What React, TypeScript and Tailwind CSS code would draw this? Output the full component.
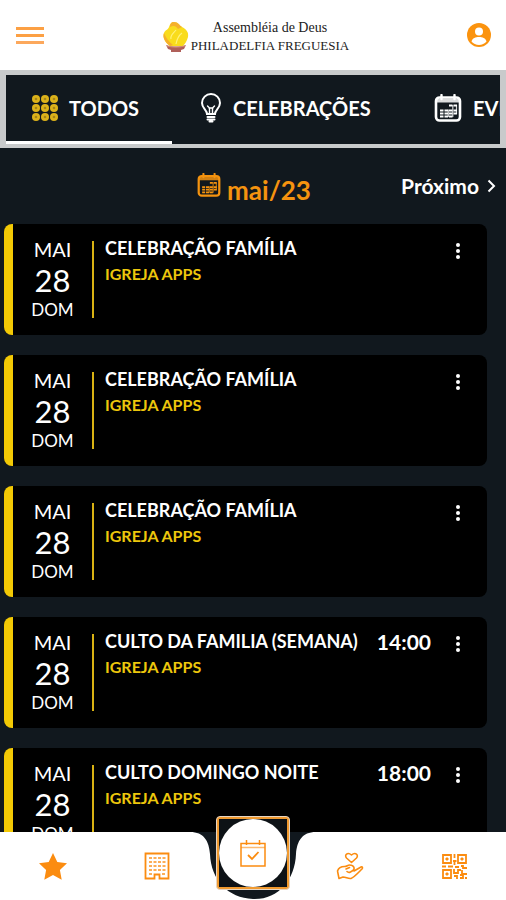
import React from 'react';

type IconProps = { className?: string };

const TodosIcon = ({ className }: IconProps) => (
  <svg viewBox="0 0 26 26" className={className} aria-hidden="true">
    {[4, 13, 22].map((y) =>
      [4, 13, 22].map((x) => (
        <g key={`${x}-${y}`}>
          <circle cx={x} cy={y} r="4" fill="#dcb21a" />
          <circle cx={x} cy={y} r="1.3" fill="#a5841a" />
        </g>
      ))
    )}
  </svg>
);

const BulbIcon = ({ className }: IconProps) => (
  <svg viewBox="0 0 22 30" className={className} fill="none" stroke="currentColor" strokeWidth="2" strokeLinecap="round" aria-hidden="true">
    <path d="M7 21c0-4-5-5.500-5-11a9 9 0 0 1 18 0c0 5.500-5 7-5 11z" />
    <path d="M7.500 24h7M7.500 26.500h7M9.500 28.500h3" />
    <path d="M9.500 21v-6l-2-2M12.500 21v-6l2-2M9 15h4" strokeWidth="1.400" />
  </svg>
);

const CalendarIcon = ({ className }: IconProps) => (
  <svg viewBox="0 0 28 28" className={className} fill="none" stroke="currentColor" aria-hidden="true">
    <rect x="2" y="3.500" width="24" height="23" rx="3.500" strokeWidth="2.600" />
    <path d="M2 6.500h24" strokeWidth="4" opacity="0.85" />
    <path d="M7.500 1v4M20.500 1v4" strokeWidth="2.400" strokeLinecap="round" />
    <path d="M15 11.500h8M6 16.500h17M6 19.500h17M6 22.500h13" strokeWidth="2" strokeDasharray="3.500 1" />
    <path d="M18.800 11v12M14.300 15.500v7.500M22.500 11v9" strokeWidth="1.200" opacity="0.8" />
  </svg>
);

const ChevronIcon = ({ className }: IconProps) => (
  <svg viewBox="0 0 9 14" className={className} fill="none" stroke="currentColor" strokeWidth="2" aria-hidden="true">
    <path d="M1.500 1.500 7 7l-5.500 5.500" />
  </svg>
);

const UserIcon = ({ className }: IconProps) => (
  <svg viewBox="0 0 24 24" className={className} aria-hidden="true">
    <circle cx="12" cy="12" r="12" fill="#fb930e" />
    <circle cx="12" cy="8.500" r="4" fill="#fff" />
    <path d="M4.500 18.500c1-3.500 4-4.500 7.500-4.500s6.500 1 7.500 4.500c-1.900 2.200-4.500 3.500-7.500 3.500s-5.600-1.300-7.500-3.500z" fill="#fff" />
  </svg>
);

const FlameLogo = ({ className }: IconProps) => (
  <svg viewBox="0 0 28 32" className={className} aria-hidden="true">
    <path d="M12 1c4 0 5 3 8 5 4 2 7 5 6 10-1 4-3 7-5 9H8C4 22 0 17 2 12c1-3 4-3 5-6 1-3 2-5 5-5z" fill="#f9dc1c" />
    <path d="M12 1c4 0 5 3 8 5l-4 2c-2-3-4-4-8-2 0-3 1-5 4-5zM2 12c-2 5 2 10 6 13l3-1c-4-3-7-7-9-12z" fill="#f5b02c" />
    <path d="M14 9c-3 4-6 5-5 9M20 12c-4 3-5 6-6 11" fill="none" stroke="#fff27a" strokeWidth="1.200" />
    <path d="M4 24c6 2 14 2 20 0l-2 4-3 1v2H9v-2l-3-1z" fill="#b0605a" />
    <path d="M5 25c6 1.500 12 1.500 18 0" stroke="#d58c72" fill="none" />
  </svg>
);

const StarIcon = ({ className }: IconProps) => (
  <svg viewBox="0 0 28 27" className={className} fill="currentColor" aria-hidden="true">
    <path d="m14 0 4.300 9 9.700 1.200-7.100 6.800 1.800 9.800L14 22l-8.700 4.800 1.800-9.800L0 10.200 9.700 9z" />
  </svg>
);

const BuildingIcon = ({ className }: IconProps) => (
  <svg viewBox="0 0 26 28" className={className} fill="none" stroke="currentColor" aria-hidden="true">
    <path d="M1.500 1.500h23v25h-9v-4h-5v4h-9z" strokeWidth="1.800" />
    {[6, 10, 14, 18, 22].map((y) => (
      <path key={y} d={y === 22 ? 'M5 22h3M18 22h3' : `M5 ${y}h3M9.500 ${y}h3M14 ${y}h3M18.500 ${y}h3`} strokeWidth="2" opacity="0.7" />
    ))}
  </svg>
);

const DonateIcon = ({ className }: IconProps) => (
  <svg viewBox="0 0 28 28" className={className} fill="none" stroke="currentColor" strokeWidth="1.600" strokeLinecap="round" strokeLinejoin="round" aria-hidden="true">
    <path d="M15.500 10.500 10.500 6C8 3 11.500-.5 15.500 3c4-3.500 7.500 0 5 3z" />
    <path d="M1.500 19c1-3 4-4.500 7-4.500 2.500 0 3-1.500 5-1.500s4 1 4.500 2.500-1.500 3.500-3.500 4.500-3.500-.5-3.500-.5M18 19l7-4c1.500-.5 2 1 1 2-4 4-8 8.500-11 9.500-3 .5-5-1.500-8-1.500L3 26.500 1.500 19M10 17l3.500-1.500" />
  </svg>
);

const QrIcon = ({ className }: IconProps) => (
  <svg viewBox="0 0 25 25" className={className} fill="none" stroke="currentColor" strokeWidth="1.800" aria-hidden="true">
    <path d="M1 1h8v8H1zM16 1h8v8h-8zM1 16h8v8H1z" />
    <path d="M3.500 5h3M5 3.500v3M18.500 5h3M20 3.500v3M3.500 20h3M5 18.500v3" />
    <path d="M12.500 0v4M11 7h3.500M12.500 6v5M0 12.500h4M6 12.500h5M13 13h4M19 12h2v2h4M12 15v4h4v-3h3M20 16v4h5M12 22h3v3M18 24h3v-3h-3M23 24h2" />
  </svg>
);

const AgendaIcon = ({ className }: IconProps) => (
  <svg viewBox="0 0 26 27" className={className} fill="none" stroke="currentColor" strokeWidth="1.500" aria-hidden="true">
    <path d="M1 3.500h24v22.500H1zM6.500 0v5M19.500 0v5" />
    <path d="M1 7.500h24" opacity="0.6" />
    <path d="m8 15 4 4 6.500-7" strokeWidth="1.800" />
  </svg>
);

const tabs = [
  { label: 'TODOS', icon: TodosIcon, iconClass: 'h-[26px] w-[26px]', tabClass: 'w-[166px] pl-[26px]', active: true },
  { label: 'CELEBRAÇÕES', icon: BulbIcon, iconClass: 'h-[30px] w-[22px]', tabClass: 'w-[234px] pl-7', active: false },
  { label: 'EVENTOS', icon: CalendarIcon, iconClass: 'h-7 w-7', tabClass: 'w-[166px] pl-7', active: false },
];

const events = [
  { title: 'CELEBRAÇÃO FAMÍLIA', time: '' },
  { title: 'CELEBRAÇÃO FAMÍLIA', time: '' },
  { title: 'CELEBRAÇÃO FAMÍLIA', time: '' },
  { title: 'CULTO DA FAMILIA (SEMANA)', time: '14:00' },
  { title: 'CULTO DOMINGO NOITE', time: '18:00' },
];

const EventCard = ({ title, time }: { title: string; time: string }) => (
  <article className="flex h-[111px] shrink-0 overflow-hidden rounded-lg border-l-[9px] border-[#f3c905] bg-black">
    <div className="flex w-[79px] shrink-0 flex-col items-center pt-3 text-white">
      <span className="text-[20px] leading-[26px]">MAI</span>
      <span className="text-[31px] leading-9">28</span>
      <span className="text-[17px] leading-6">DOM</span>
    </div>
    <div className="my-[17px] w-0.5 shrink-0 bg-[#d9b213]"></div>
    <div className="min-w-0 flex-1 pt-3 pl-[11px]">
      <h2 className="truncate text-[18px] leading-6 font-bold text-white">{title}</h2>
      <p className="mt-0.5 text-[16px] leading-6 font-bold text-[#edc70c]">IGREJA APPS</p>
    </div>
    <time className="pt-3 text-[21px] leading-[26px] font-bold text-white">{time}</time>
    <button aria-label="Opções" className="mt-[17px] mr-[18px] ml-4 flex h-5 w-[22px] flex-col items-center justify-between py-0.5">
      <span className="size-1 rounded-full bg-white"></span>
      <span className="size-1 rounded-full bg-white"></span>
      <span className="size-1 rounded-full bg-white"></span>
    </button>
  </article>
);

const App = () => {
  return (
    <div className="flex h-screen flex-col overflow-hidden bg-[#11181e] font-['Lato','Open_Sans',sans-serif]">
      {/* Header */}
      <header className="flex h-[70px] shrink-0 items-center justify-between bg-white pr-[15px] pl-4">
        <button aria-label="Menu" className="flex w-7 flex-col gap-1">
          <span className="h-[3px] bg-[#fca044]"></span>
          <span className="h-[3px] bg-[#fca044]"></span>
          <span className="h-[3px] bg-[#fca85c]"></span>
        </button>
        <a href="#" className="flex items-center gap-px pt-1 font-['Liberation_Serif',serif] text-[#222]">
          <FlameLogo className="h-8 w-7" />
          <span className="flex flex-col items-center">
            <span className="text-[14px] leading-[18px]">Assembléia de Deus</span>
            <span className="text-[13px] leading-[18px]">PHILADELFIA FREGUESIA</span>
          </span>
        </a>
        <button aria-label="Perfil">
          <UserIcon className="size-6" />
        </button>
      </header>

      {/* Tabs */}
      <div className="flex h-[78px] shrink-0 overflow-hidden border-x-[6px] border-t-[5px] border-b-4 border-[#c8cacb]">
        {tabs.map((tab) => (
          <button
            key={tab.label}
            className={`flex shrink-0 items-center gap-[11px] border-b-[3px] text-[20px] font-bold text-white ${tab.tabClass} ${tab.active ? 'border-white' : 'border-transparent'}`}
          >
            <tab.icon className={tab.iconClass} />
            {tab.label}
          </button>
        ))}
      </div>

      {/* Month */}
      <div className="grid h-[76px] shrink-0 grid-cols-[1fr_auto_1fr] items-center pr-2.5 pl-3">
        <h1 className="col-start-2 flex gap-1.5 pt-2 text-[26px] leading-[34px] font-bold text-[#f5930f]">
          <CalendarIcon className="size-6" />
          mai/23
        </h1>
        <button className="flex items-center gap-2 justify-self-end text-[21px] leading-7 font-bold text-white">
          Próximo
          <ChevronIcon className="h-3.5 w-[9px]" />
        </button>
      </div>

      {/* Events */}
      <main className="flex min-h-0 flex-1 flex-col gap-5 overflow-hidden pr-[19px] pl-1">
        {events.map((event, index) => (
          <EventCard key={index} title={event.title} time={event.time} />
        ))}
      </main>

      {/* Bottom navigation */}
      <nav className="relative flex h-[68px] shrink-0 text-[#fb8c10]">
        <div className="flex flex-1 items-center justify-between bg-white pr-5 pl-[39px]">
          <a href="#" aria-label="Favoritos"><StarIcon className="h-[27px] w-7" /></a>
          <a href="#" aria-label="Igreja"><BuildingIcon className="h-7 w-[26px]" /></a>
        </div>
        <svg viewBox="0 0 126 68" className="h-[68px] w-[126px] shrink-0" fill="#fff" aria-hidden="true">
          <path d="M0 0C14 0 19 9 20 22c1 26 18 44 43 45s42-19 43-45C107 9 112 0 126 0v68H0z" />
        </svg>
        <div className="flex flex-1 items-center justify-between bg-white pr-[39px] pl-5">
          <a href="#" aria-label="Doações"><DonateIcon className="size-7" /></a>
          <a href="#" aria-label="QR Code"><QrIcon className="size-[25px]" /></a>
        </div>
        <a
          href="#"
          aria-label="Agenda"
          className="absolute -top-4 left-1/2 flex size-[74px] -translate-x-1/2 items-center justify-center rounded-[4px] border border-[#e8d5c0] bg-[#f09a30] p-0.5"
        >
          <span className="flex size-full items-center justify-center bg-[#0d1216]">
            <span className="flex size-full items-center justify-center rounded-full bg-white">
              <AgendaIcon className="h-[27px] w-[26px]" />
            </span>
          </span>
        </a>
      </nav>
    </div>
  );
};

export default App;
